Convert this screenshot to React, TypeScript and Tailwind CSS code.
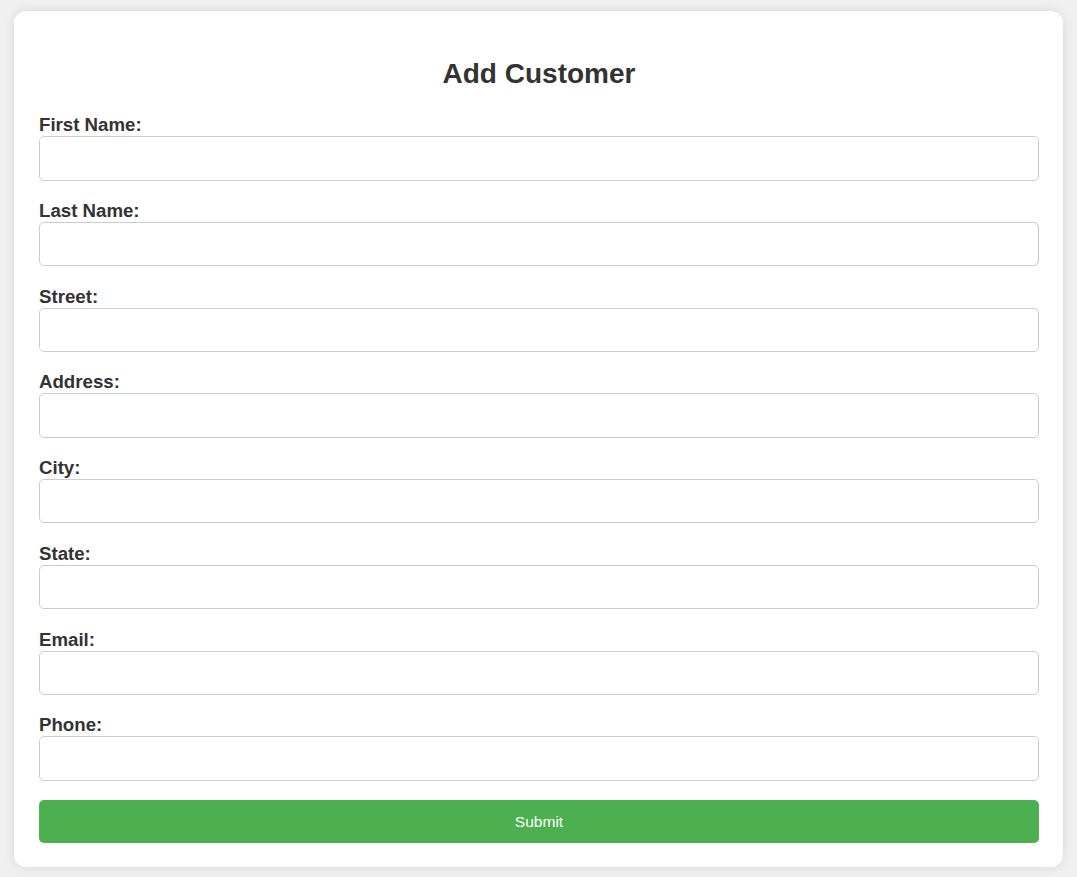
import React from "react";

const fields = [
  { id: "firstName", label: "First Name:" },
  { id: "lastName", label: "Last Name:" },
  { id: "street", label: "Street:" },
  { id: "address", label: "Address:" },
  { id: "city", label: "City:" },
  { id: "state", label: "State:" },
  { id: "email", label: "Email:" },
  { id: "phone", label: "Phone:" },
];

export default function App() {
  return (
    <div
      className="min-h-[877px] bg-[#f0f0f0] px-[14px] pt-[11px] pb-[10px]"
      style={{ fontFamily: '"Liberation Sans", Arial, sans-serif' }}
    >
      <div className="bg-white rounded-[12px] shadow-[0_0_12px_rgba(0,0,0,0.1)] pt-[47.3px] pb-[24px] pl-[25px] pr-[24px]">
        <h2 className="text-center text-[28px] leading-[32px] font-bold text-[#333] mb-[23.9px]">
          Add Customer
        </h2>
        <form onSubmit={(e) => e.preventDefault()}>
          {fields.map((f) => (
            <div key={f.id} className="mb-[19.4px]">
              <label
                htmlFor={f.id}
                className="block text-[18.67px] leading-[21px] font-bold text-[#333] mb-[1px]"
              >
                {f.label}
              </label>
              <input
                id={f.id}
                type="text"
                className="block w-full h-[44.33px] border border-[#ccc] rounded-[5px] px-[10px] text-[15.5px] outline-none"
              />
            </div>
          ))}
          <button
            type="submit"
            className="block w-full h-[43px] bg-[#4caf50] text-white text-[15.56px] rounded-[5px]"
          >
            Submit
          </button>
        </form>
      </div>
    </div>
  );
}
